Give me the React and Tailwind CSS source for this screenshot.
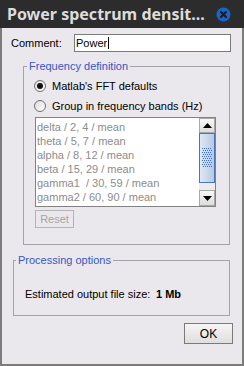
const bands = [
  'delta / 2, 4 / mean',
  'theta / 5, 7 / mean',
  'alpha / 8, 12 / mean',
  'beta / 15, 29 / mean',
  'gamma1  / 30, 59 / mean',
  'gamma2 / 60, 90 / mean',
];

const Radio = ({ checked }) => (
  <span className="flex h-[12px] w-[12px] items-center justify-center rounded-full border border-[#6f6f6f] bg-gradient-to-br from-[#dcdcdc] to-white">
    {checked && <span className="h-[6px] w-[6px] rounded-full bg-[#111]" />}
  </span>
);

const Arrow = ({ up }) => (
  <svg width="9" height="5" viewBox="0 0 9 5">
    <path d={up ? 'M0 5 L4.5 0 L9 5 Z' : 'M0 0 L4.5 5 L9 0 Z'} fill="#000" />
  </svg>
);

const Grip = () => (
  <svg width="10" height="20" viewBox="0 0 10 20">
    {Array.from({ length: 10 }).map((_, r) =>
      Array.from({ length: 5 }).map((__, c) => (
        <rect key={`${r}-${c}`} x={c * 2 + (r % 2)} y={r * 2} width="1" height="1" fill="#3d6fd0" />
      )),
    )}
  </svg>
);

const GroupTitle = ({ children, className }) => (
  <span className={`-mt-[8px] block h-[14px] w-fit bg-[#eae8ed] px-[2px] leading-[14px] text-[#3557c4] ${className}`}>
    {children}
  </span>
);

export default function App() {
  return (
    <div className="flex h-[366px] w-[244px] flex-col font-['Liberation_Sans',Arial,sans-serif] text-[11px] text-black">
      <div className="flex h-[28px] shrink-0 items-center justify-between bg-[#2c2c2c] pl-[7px] pr-[13px]">
        <span className="font-['Noto_Sans',sans-serif] text-[16px] font-bold leading-none text-[#dcdcdc]">
          Power spectrum densit...
        </span>
        <svg width="15" height="15" viewBox="0 0 15 15">
          <circle cx="7.5" cy="7.5" r="7" fill="#1e63c2" />
          <path d="M5 5 L10 10 M10 5 L5 10" stroke="#121a2a" strokeWidth="2" strokeLinecap="round" />
        </svg>
      </div>

      <div className="flex flex-1 flex-col border-x-2 border-b-2 border-[#7c7c7c] bg-[#eae8ed]">
        <div className="mt-[6px] flex h-[18px] items-center pl-[9px]">
          <span className="w-[63px]">Comment:</span>
          <div className="flex h-[18px] w-[157px] items-center border border-[#7a7a7a] bg-white pl-[1px]">
            <span>Power</span>
            <span className="ml-[1px] h-[12px] w-px bg-black" />
          </div>
        </div>

        <div className="ml-[21px] mt-[14px] flex h-[179px] w-[207px] flex-col border border-[#a3a3a3]">
          <GroupTitle className="ml-[3px]">Frequency definition</GroupTitle>
          <div className="mt-[6px] flex h-[14px] items-center gap-[6px] pl-[10px]">
            <Radio checked />
            <span>Matlab's FFT defaults</span>
          </div>
          <div className="mt-[6px] flex h-[14px] items-center gap-[6px] pl-[10px]">
            <Radio />
            <span>Group in frequency bands (Hz)</span>
          </div>

          <div className="ml-[11px] mt-[4px] flex h-[90px] w-[181px] border border-[#828282] bg-white">
            <div className="flex-1 pl-[1px] pt-[2px] text-[#8c8c8c]">
              {bands.map((b) => (
                <div key={b} className="h-[14px] whitespace-pre leading-[14px]">
                  {b}
                </div>
              ))}
            </div>
            <div className="flex w-[16px] flex-col bg-[#e8e8e8]">
              <div className="flex h-[15px] items-center justify-center border border-[#a8a8a8] bg-gradient-to-b from-[#f8f8f8] to-[#dcdcdc]">
                <Arrow up />
              </div>
              <div className="flex h-[50px] items-center justify-center border border-[#4d74b8] bg-gradient-to-r from-[#dfe8f5] to-[#b6cae3]">
                <Grip />
              </div>
              <div className="flex-1 bg-[#ececec]" />
              <div className="flex h-[16px] items-center justify-center border border-[#a8a8a8] bg-gradient-to-b from-[#f8f8f8] to-[#dcdcdc]">
                <Arrow />
              </div>
            </div>
          </div>

          <div className="ml-[11px] mt-[3px] flex h-[18px] w-[39px] items-center justify-center border border-[#b4b4b4] text-[#a5a5a5]">
            Reset
          </div>
        </div>

        <div className="ml-[11px] mt-[15px] flex h-[56px] w-[217px] flex-col border border-[#a3a3a3]">
          <GroupTitle className="ml-[2px]">Processing options</GroupTitle>
          <div className="mt-[20px] flex h-[14px] items-center pl-[11px]">
            <span className="w-[131px]">Estimated output file size:</span>
            <span className="font-bold">1 Mb</span>
          </div>
        </div>

        <div className="mr-[9px] mt-[7px] flex justify-end">
          <div className="flex h-[21px] w-[49px] items-center justify-center border border-[#7a7a7a] bg-gradient-to-b from-[#f6f6f6] to-[#dedede] text-[12px]">
            OK
          </div>
        </div>
      </div>
    </div>
  );
}
